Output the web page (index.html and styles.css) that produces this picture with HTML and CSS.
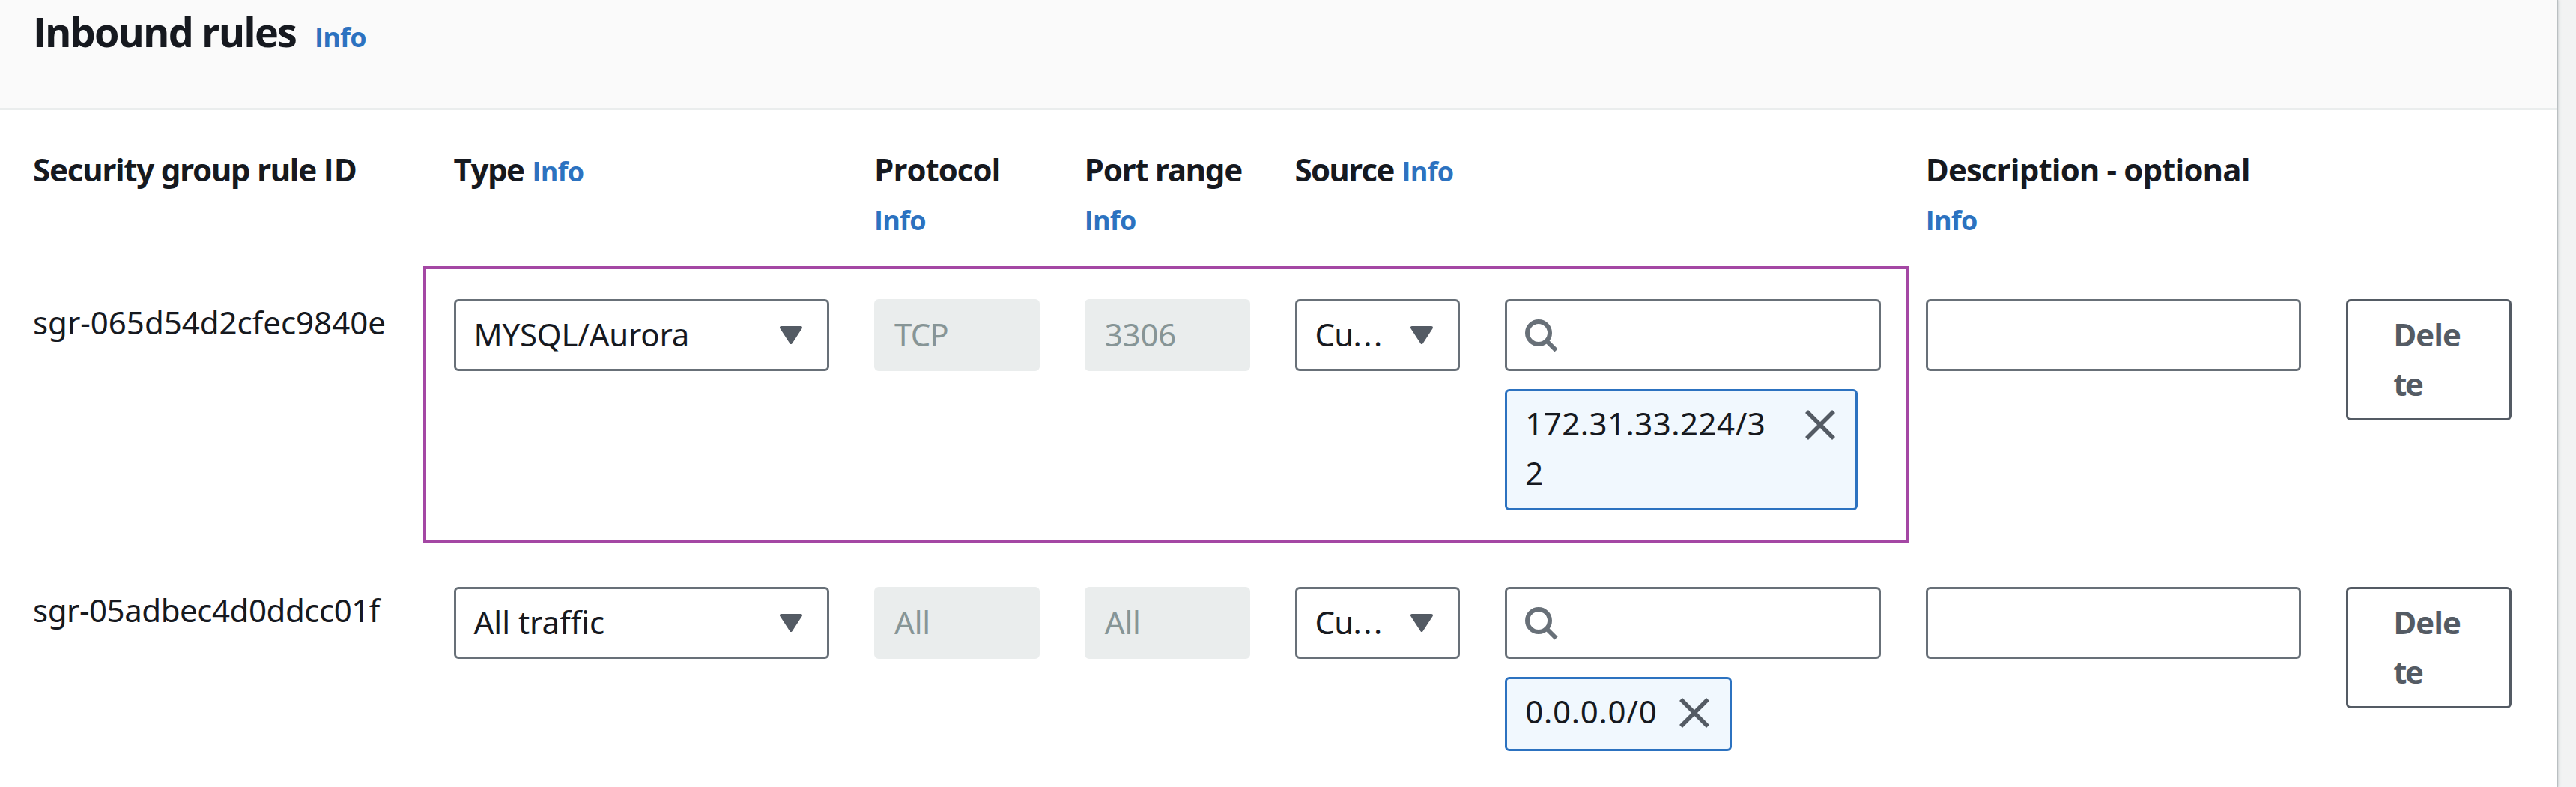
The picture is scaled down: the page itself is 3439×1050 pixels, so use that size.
FILE: index.html
```html
<!DOCTYPE html>
<html lang="en">
<head>
<meta charset="utf-8">
<title>Inbound rules</title>
<link rel="stylesheet" href="styles.css">
</head>
<body>
<svg class="defs" aria-hidden="true">
  <symbol id="caret" viewBox="0 0 30 24"><path d="M2 2H28L15 22Z" fill="#545b64" stroke="#545b64" stroke-width="4" stroke-linejoin="round"/></symbol>
  <symbol id="search" viewBox="0 0 44 44"><g fill="none" stroke="#687078" stroke-width="6"><circle cx="18" cy="18" r="15"/><path d="M28.5 28.5L41.5 41.5"/></g></symbol>
  <symbol id="close" viewBox="0 0 40 40"><path d="M2 2L38 38M38 2L2 38" stroke="#545b64" stroke-width="5.6"/></symbol>
</svg>
<main class="panel">
  <header class="panel-header">
    <h2 class="title">Inbound rules</h2>
    <a class="info">Info</a>
  </header>
  <section class="rules">
    <div class="grid head">
      <div class="label group wide">Security group rule <span class="plain-i">ID</span></div>
      <div class="label wide">Type<a class="info inline">Info</a></div>
      <div class="label proto">Protocol<a class="info below">Info</a></div>
      <div class="label port">Port range<a class="info below">Info</a></div>
      <div class="label source">Source<a class="info inline">Info</a></div>
      <div class="label wide desc">Description - optional<a class="info below">Info</a></div>
    </div>

    <div class="grid row">
      <div class="rule-id wide">sgr-065d54d2cfec9840e</div>
      <div class="field wide select"><span>MYSQL/Aurora</span><svg class="caret"><use href="#caret"/></svg></div>
      <div class="field disabled tcp">TCP</div>
      <div class="field disabled">3306</div>
      <div class="field select"><span class="custom">Cu<span class="dots">...</span></span><svg class="caret"><use href="#caret"/></svg></div>
      <div class="wide">
        <div class="field"><svg class="search"><use href="#search"/></svg></div>
        <div class="token token-long"><span class="cidr">172.31.33.224/3<br>2</span><svg class="close"><use href="#close"/></svg></div>
      </div>
      <div class="field wide"></div>
      <button class="delete">Dele<br><span class="te">te</span></button>
      <div class="highlight"></div>
    </div>

    <div class="grid">
      <div class="rule-id second wide">sgr-05adbec4d0ddcc01f</div>
      <div class="field wide select"><span class="traffic">All traffic</span><svg class="caret"><use href="#caret"/></svg></div>
      <div class="field disabled">All</div>
      <div class="field disabled">All</div>
      <div class="field select"><span class="custom">Cu<span class="dots">...</span></span><svg class="caret"><use href="#caret"/></svg></div>
      <div class="wide">
        <div class="field"><svg class="search"><use href="#search"/></svg></div>
        <div class="token token-short"><span class="cidr any">0.0.0.0/0</span><svg class="close"><use href="#close"/></svg></div>
      </div>
      <div class="field wide"></div>
      <button class="delete">Dele<br><span class="te">te</span></button>
    </div>
  </section>
</main>
</body>
</html>
```
FILE: styles.css
```css
* { box-sizing: border-box; }

body {
  margin: 0;
  height: 1050px;
  overflow: hidden;
  background: #f2f3f3;
  color: #16191f;
  font: 42px/66px "Noto Sans", sans-serif;
}

.defs { display: none; }

.panel {
  width: 3413px;
  height: 1050px;
  background: #fff;
  box-shadow: 1px 0 1px 1px #b9bfc1, 3px 0 4px 0 #d5d9da;
}

.panel-header {
  display: flex;
  align-items: baseline;
  gap: 25px;
  height: 147px;
  padding: 9px 44px 0;
  background: #fafafa;
  border-bottom: 3px solid #eaeded;
}

.title {
  margin: 0;
  font: 700 54px/66px "Open Sans", sans-serif;
  letter-spacing: -1.88px;
}

.info {
  color: #2c72c0;
  font: 700 36px/66px "Open Sans", sans-serif;
  letter-spacing: -0.74px;
}
.info.inline { margin-left: 11px; }
.info.below { display: block; padding-top: 2px; }

.rules { padding: 46px 0 0 44px; }

/* Twelve columns; wide cells take two */
.grid {
  position: relative;
  display: grid;
  grid-template-columns: repeat(12, 220.75px);
  column-gap: 60px;
  align-items: start;
  width: 3309px;
}
.wide { grid-column-end: span 2; }

.head { height: 206px; }
.row { height: 384px; }

.label {
  font-family: "Open Sans", sans-serif;
  font-weight: 700;
  letter-spacing: -1.4px;
  white-space: nowrap;
}
.label.group,
.label.port { font-family: "Noto Sans", sans-serif; letter-spacing: -1.2px; }
.label.proto { letter-spacing: -0.97px; }
.label.source { letter-spacing: -1.7px; }
.label.desc { grid-column-start: 10; letter-spacing: -0.88px; }
.plain-i { font-family: "Open Sans", sans-serif; letter-spacing: 0; }

.rule-id { margin-top: -2px; }
.rule-id.second { letter-spacing: -0.45px; }

.field {
  display: flex;
  align-items: center;
  height: 96px;
  padding: 0 24px 3px;
  border: 3px solid #687078;
  border-radius: 6px;
  background: #fff;
  letter-spacing: -0.2px;
}
.field.select { justify-content: space-between; padding-right: 33px; }
.field.disabled {
  padding-bottom: 2px;
  border-color: #eaeded;
  background: #eaeded;
  color: #879596;
}
.field.tcp { letter-spacing: -0.88px; }
.custom { letter-spacing: -0.8px; }
.dots { letter-spacing: 2.6px; }
.traffic { letter-spacing: 0; }

svg { display: block; flex: none; }
.caret { width: 30px; height: 24px; margin-top: 3px; }
.search { width: 44px; height: 44px; margin-top: 5px; }
.close { width: 40px; height: 40px; margin-top: 15px; }

.token {
  display: flex;
  justify-content: space-between;
  align-items: flex-start;
  margin-top: 24px;
  padding: 10px 27px 0 24px;
  border: 3px solid #2c72c0;
  border-radius: 6px;
  background: #f1f8fe;
}
.token-long { width: 471px; height: 162px; }
.token-short { width: 303px; height: 99px; }
.cidr { letter-spacing: 0.49px; }
.cidr.any { letter-spacing: 0.75px; }

.delete {
  height: 162px;
  padding: 0 0 3px 60px;
  border: 3px solid #545b64;
  border-radius: 6px;
  background: #fff;
  color: #545b64;
  font: 700 42px/66px "Open Sans", sans-serif;
  letter-spacing: -1px;
  text-align: left;
}
.te { letter-spacing: -2.5px; }

/* Marker drawn over the MySQL rule */
.highlight {
  position: absolute;
  left: 521px;
  top: -44px;
  width: 1984px;
  height: 369px;
  border: 4px solid #a447a4;
}
```
